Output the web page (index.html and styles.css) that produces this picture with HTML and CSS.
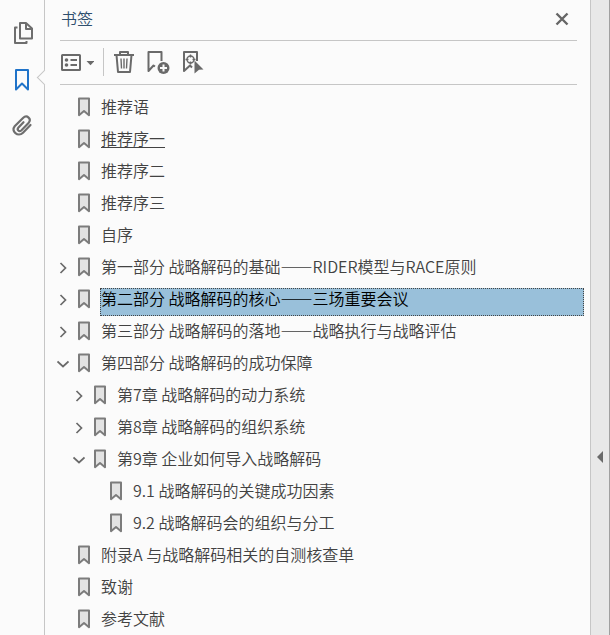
FILE: index.html
```html
<!DOCTYPE html>
<html lang="zh-CN">
<head>
    <meta charset="UTF-8">
    <title>书签</title>
    <meta name="viewport" content="width=device-width, initial-scale=1.0">
    <link rel="stylesheet" href="styles.css">
</head>
<body>
    <svg class="defs" aria-hidden="true">
        <symbol id="mark" viewBox="0 0 12 20">
            <path d="M1 1.500h10v16.700l-5-4.200-5 4.200z" fill="#e3e3e3" stroke="#7c7c7c" stroke-width="2" stroke-linejoin="round"/>
        </symbol>
        <symbol id="right" viewBox="0 0 12 12">
            <path d="M3.500 1l5 5-5 5" fill="none" stroke="#6a6a6a" stroke-width="1.700"/>
        </symbol>
        <symbol id="down" viewBox="0 0 12 12">
            <path d="M0.500 3.500l5.500 5 5.500-5" fill="none" stroke="#6a6a6a" stroke-width="1.700"/>
        </symbol>
    </svg>

    <nav class="sidebar">
        <button type="button" aria-label="页面">
            <svg width="22" height="24" viewBox="0 0 22 24" fill="none" stroke="#6e6e6e" stroke-width="2" stroke-linejoin="round">
                <path d="M9 2h6l6 5.500v10H9z"/>
                <path d="M15 2v6h6"/>
                <path d="M6.500 6.500H4v15.500h11.500v-2"/>
            </svg>
        </button>
        <button type="button" class="current" aria-label="书签">
            <svg width="22" height="24" viewBox="0 0 22 24" fill="none" stroke="#1f73c9" stroke-width="2" stroke-linejoin="round">
                <path d="M5 3h12v19.500l-6-6-6 6z"/>
            </svg>
        </button>
        <button type="button" aria-label="附件">
            <svg width="22" height="24" viewBox="0 0 22 24" fill="none" stroke="#6e6e6e" stroke-width="2.200" stroke-linecap="round">
                <path d="M19.500 12l-7.500 7.700c-5 5-12.500-1.500-8.300-6.500l8.300-8.200c4-3.800 9 1 5.500 5l-7 7.200c-2.500 2.300-5-0.500-3-2.800l5-5.200"/>
            </svg>
        </button>
    </nav>

    <main class="panel">
        <header class="header">
            <h1>书签</h1>
            <button type="button" aria-label="关闭">
                <svg width="14" height="14" viewBox="0 0 14 14" stroke="#666" stroke-width="2.400"><path d="M1.500 1.500l11 11M12.500 1.500l-11 11"/></svg>
            </button>
        </header>

        <div class="toolbar">
            <button type="button" class="options" aria-label="选项">
                <svg width="34" height="24" viewBox="0 0 34 24" fill="none" stroke="#6a6a6a" stroke-width="2">
                    <rect x="2" y="5" width="18" height="15" rx="0.500"/>
                    <path d="M10.500 10h6.500M10.500 15h6.500"/>
                    <path d="M26.500 11h8l-4 4.200z" fill="#6a6a6a" stroke="none"/>
                    <circle cx="6.500" cy="10" r="1.800" fill="#6a6a6a" stroke="none"/>
                    <circle cx="6.500" cy="15" r="1.800" fill="#6a6a6a" stroke="none"/>
                </svg>
            </button>
            <button type="button" aria-label="删除">
                <svg width="22" height="24" viewBox="1 0 22 24" fill="none" stroke="#6a6a6a" stroke-width="2" stroke-linejoin="round">
                    <path d="M1 5h20M7 4.500V2h8v2.500M3.500 5l1.500 17h12l1.500-17"/>
                    <path d="M8 8.500l0.500 10M11 8.500v10M14 8.500l-0.500 10" stroke-width="1.400"/>
                </svg>
            </button>
            <button type="button" aria-label="新建书签">
                <svg width="24" height="24" viewBox="0 0 24 24" fill="none" stroke="#6a6a6a" stroke-width="2" stroke-linejoin="round">
                    <path d="M9 16.500L7.500 15.500l-5 5.500V2h13v9"/>
                    <circle cx="17.500" cy="18" r="6" fill="#6a6a6a" stroke="none"/>
                    <path d="M17.500 14.500v7M14 18h7" stroke="#fbfbfb"/>
                </svg>
            </button>
            <button type="button" aria-label="查找当前书签">
                <svg width="24" height="24" viewBox="0 0 24 24" fill="none" stroke="#6a6a6a" stroke-width="2" stroke-linejoin="round">
                    <path d="M12 17.500l-2-2-6 5.500V2h13v9"/>
                    <circle cx="10.500" cy="9.500" r="3.500" stroke-width="1.400"/>
                    <path d="M10.500 4.500v3M10.500 11.500v3M5.500 9.500h3M12.500 9.500h3" stroke-width="1.400"/>
                    <path d="M14.500 10.500l9 9-4.500 0.300-4.500 3.700z" fill="#6a6a6a" stroke="none"/>
                </svg>
            </button>
        </div>

        <ul class="tree">
            <li><div class="row"><svg class="mark"><use href="#mark"/></svg><a href="#">推荐语</a></div></li>
            <li><div class="row"><svg class="mark"><use href="#mark"/></svg><a href="#" class="visited">推荐序一</a></div></li>
            <li><div class="row"><svg class="mark"><use href="#mark"/></svg><a href="#">推荐序二</a></div></li>
            <li><div class="row"><svg class="mark"><use href="#mark"/></svg><a href="#">推荐序三</a></div></li>
            <li><div class="row"><svg class="mark"><use href="#mark"/></svg><a href="#">自序</a></div></li>
            <li><div class="row"><button type="button" aria-label="展开"><svg><use href="#right"/></svg></button><svg class="mark"><use href="#mark"/></svg><a href="#">第一部分 战略解码的基础——RIDER模型与RACE原则</a></div></li>
            <li><div class="row"><button type="button" aria-label="展开"><svg><use href="#right"/></svg></button><svg class="mark"><use href="#mark"/></svg><a href="#" class="selected">第二部分 战略解码的核心——三场重要会议</a></div></li>
            <li><div class="row"><button type="button" aria-label="展开"><svg><use href="#right"/></svg></button><svg class="mark"><use href="#mark"/></svg><a href="#">第三部分 战略解码的落地——战略执行与战略评估</a></div></li>
            <li>
                <div class="row"><button type="button" aria-label="折叠"><svg><use href="#down"/></svg></button><svg class="mark"><use href="#mark"/></svg><a href="#">第四部分 战略解码的成功保障</a></div>
                <ul>
                    <li><div class="row"><button type="button" aria-label="展开"><svg><use href="#right"/></svg></button><svg class="mark"><use href="#mark"/></svg><a href="#">第7章 战略解码的动力系统</a></div></li>
                    <li><div class="row"><button type="button" aria-label="展开"><svg><use href="#right"/></svg></button><svg class="mark"><use href="#mark"/></svg><a href="#">第8章 战略解码的组织系统</a></div></li>
                    <li>
                        <div class="row"><button type="button" aria-label="折叠"><svg><use href="#down"/></svg></button><svg class="mark"><use href="#mark"/></svg><a href="#">第9章 企业如何导入战略解码</a></div>
                        <ul>
                            <li><div class="row"><svg class="mark"><use href="#mark"/></svg><a href="#">9.1 战略解码的关键成功因素</a></div></li>
                            <li><div class="row"><svg class="mark"><use href="#mark"/></svg><a href="#">9.2 战略解码会的组织与分工</a></div></li>
                        </ul>
                    </li>
                </ul>
            </li>
            <li><div class="row"><svg class="mark"><use href="#mark"/></svg><a href="#">附录A 与战略解码相关的自测核查单</a></div></li>
            <li><div class="row"><svg class="mark"><use href="#mark"/></svg><a href="#">致谢</a></div></li>
            <li><div class="row"><svg class="mark"><use href="#mark"/></svg><a href="#">参考文献</a></div></li>
        </ul>
    </main>

    <button type="button" class="splitter" aria-label="收起面板">
        <svg width="6" height="12" viewBox="0 0 6 12"><path d="M6 0v12L0 6z" fill="#6a6a6a"/></svg>
    </button>
</body>
</html>
```

FILE: styles.css
```css
* {
    box-sizing: border-box;
}
body {
    margin: 0;
    height: 100vh;
    display: flex;
    overflow: hidden;
    background: #fbfbfb;
    color: #424242;
    font-family: "Noto Sans CJK SC", sans-serif;
    font-size: 16px;
    font-weight: 350;
}
button {
    display: flex;
    align-items: center;
    justify-content: center;
    padding: 0;
    border: none;
    background: none;
    cursor: pointer;
}
svg {
    display: block;
    flex: none;
}
.defs {
    position: absolute;
    width: 0;
    height: 0;
}

/* left icon bar */
.sidebar {
    flex: none;
    display: flex;
    flex-direction: column;
    gap: 22px;
    width: 45px;
    padding-top: 21px;
    border-right: 1px solid #c6c6c6;
}
.sidebar button {
    position: relative;
    height: 24px;
}
/* notch pointing at the open panel */
.sidebar .current::after {
    content: "";
    position: absolute;
    right: -6px;
    top: 5px;
    width: 10px;
    height: 10px;
    background: #fbfbfb;
    border-left: 1px solid #c6c6c6;
    border-bottom: 1px solid #c6c6c6;
    transform: rotate(45deg);
}

/* bookmark panel */
.panel {
    flex: 1;
    min-width: 0;
    padding: 0 6px 0 10px;
}
.header, .toolbar {
    display: flex;
    align-items: center;
    margin: 0 7px 0 5px;
    border-bottom: 1px solid #c6c6c6;
}
.header {
    justify-content: space-between;
    height: 41px;
    padding: 0 8px 2px 1px;
}
.header h1 {
    margin: 0;
    padding-bottom: 2px;
    color: #2f4f6e;
    font-size: 16px;
    font-weight: 350;
    line-height: 18px;
}
.toolbar {
    gap: 10px;
    height: 44px;
    padding-bottom: 2px;
}
.toolbar .options {
    height: 28px;
    padding-right: 9px;
    border-right: 1px solid #c6c6c6;
}

.tree, .tree ul {
    margin: 0;
    padding: 0;
    list-style: none;
}
.tree {
    padding-top: 11px;
}
.tree ul {
    padding-left: 16px;
}
.row {
    display: grid;
    grid-template-columns: 16px 12px 1fr;
    column-gap: 7px;
    height: 28px;
    margin-bottom: 4px;
}
.row button {
    height: 24px;
}
.row button svg {
    width: 12px;
    height: 12px;
}
.row .mark {
    grid-column: 2;
    width: 12px;
    height: 20px;
    margin-top: 1px;
}
.row a {
    margin-left: 3px;
    border: 1px solid transparent;
    color: inherit;
    line-height: 18px;
    text-decoration: none;
    white-space: nowrap;
}
.row a.visited {
    text-decoration: underline;
    text-underline-offset: 2px;
}
.row a.selected {
    background: #99c0da;
    border: 1px dotted #444;
    color: #000;
}

/* collapse strip on the right edge */
.splitter {
    flex: none;
    width: 20px;
    padding-top: 278px;
    background: #e8e8e8;
    border-left: 1px solid #c6c6c6;
    border-right: 1px solid #a0a0a0;
}
```
